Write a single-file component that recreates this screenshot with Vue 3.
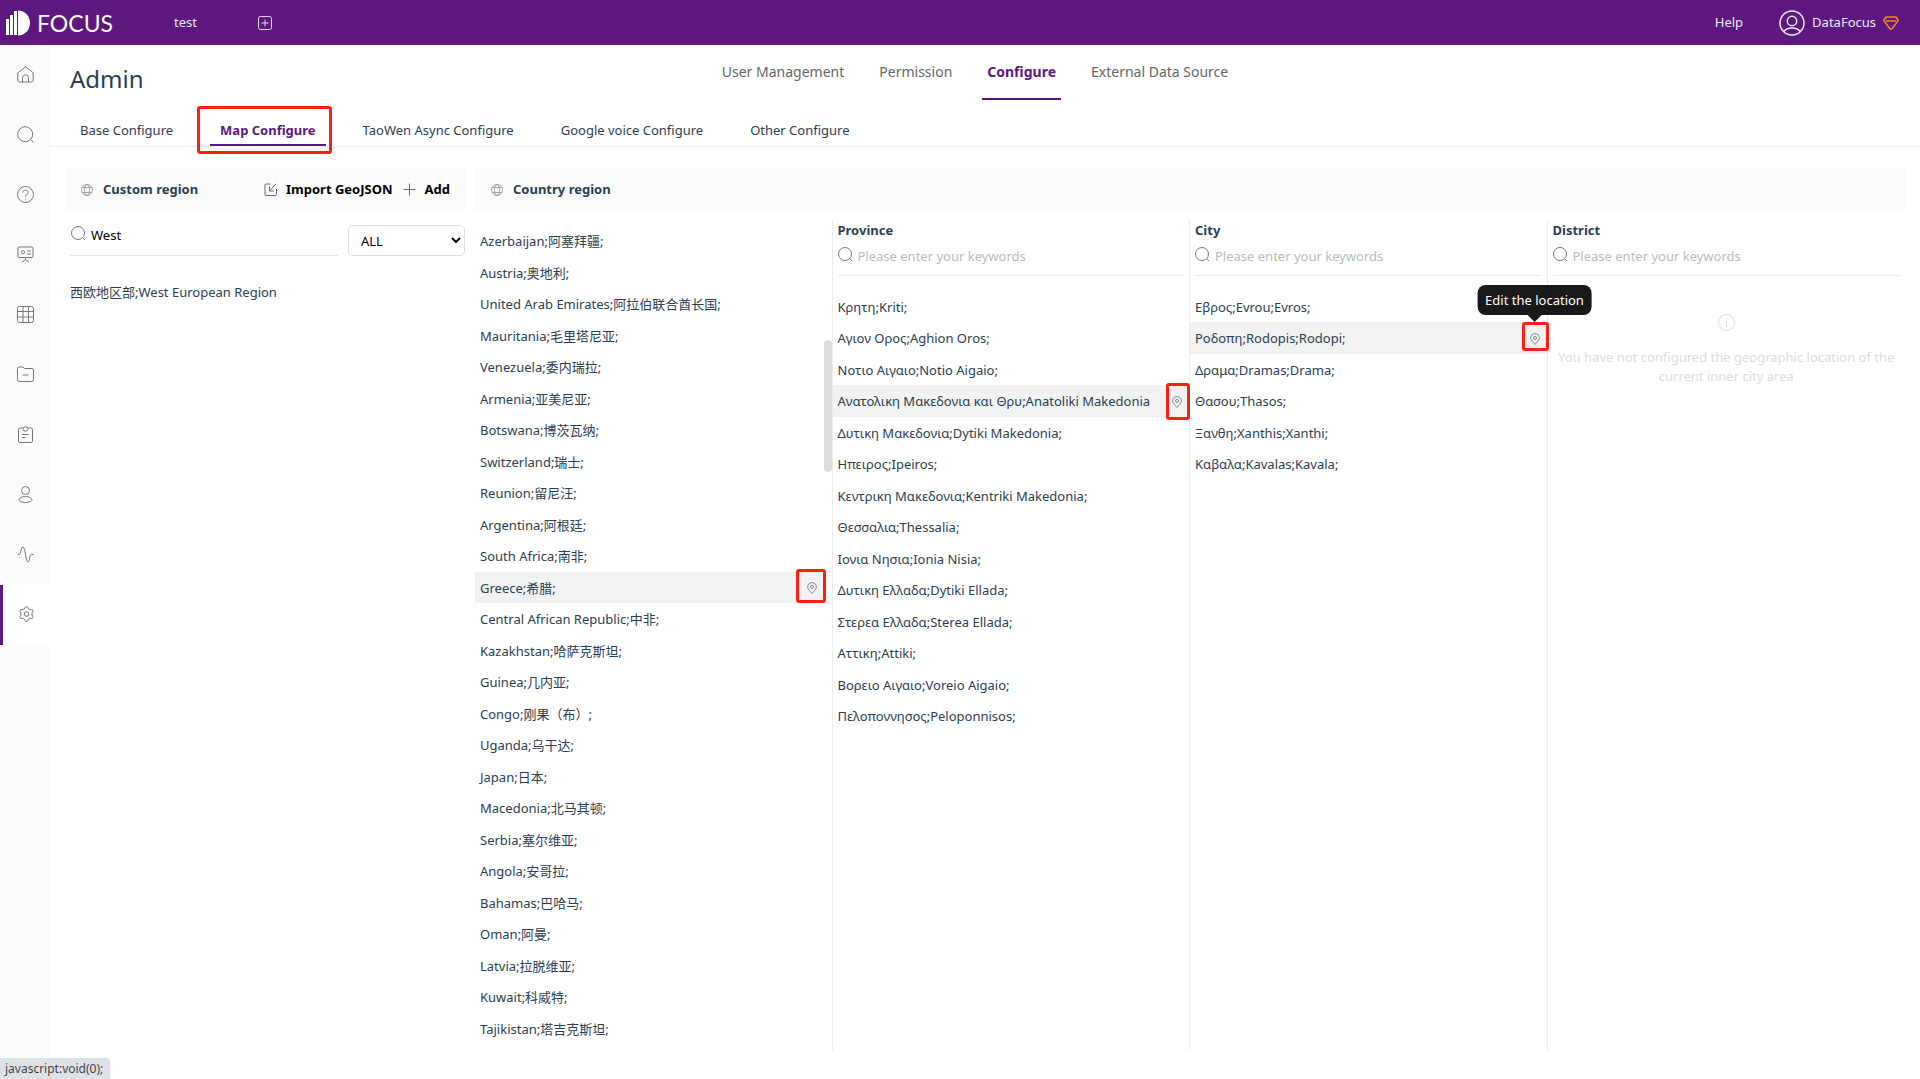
<script setup>
import { ref } from 'vue'

const navItems = ['User Management', 'Permission', 'Configure', 'External Data Source']
const activeNav = 'Configure'

const tabs = ['Base Configure', 'Map Configure', 'TaoWen Async Configure', 'Google voice Configure', 'Other Configure']
const activeTab = 'Map Configure'

const sideItems = [
  { name: 'Home', paths: ['M.8 6.800 8.500.8l7.700 6v7.400a1.800 1.800 0 0 1-1.800 1.800H2.600a1.800 1.800 0 0 1-1.800-1.800z', 'M5.500 16v-4.200a3 3 0 0 1 6 0V16'] },
  { name: 'Search', paths: ['M8.2.7a7.5 7.5 0 1 0 0 15 7.5 7.5 0 0 0 0-15z', 'M13.7 13.4l2.6 3'] },
  { name: 'Questions', paths: ['M8.5.5a8 8 0 1 0 0 16 8 8 0 0 0 0-16z', 'M6 6.6a2.5 2.5 0 1 1 3.9 2.1c-.9.6-1.4 1-1.4 2.1', 'M8.5 12.4v1.2'] },
  { name: 'Dashboards', paths: ['M2 1h13a1 1 0 0 1 1 1v8.5a1 1 0 0 1-1 1H2a1 1 0 0 1-1-1V2a1 1 0 0 1 1-1z', 'M8.5 11.5v2.5M5 16l3.5-2.3L12 16', 'M6 4.7a1.6 1.6 0 1 0 0 3.2 1.6 1.6 0 0 0 0-3.2z', 'M10 5h4M10 8h4'] },
  { name: 'Tables', paths: ['M2.5.5h12a2 2 0 0 1 2 2v12a2 2 0 0 1-2 2h-12a2 2 0 0 1-2-2v-12a2 2 0 0 1 2-2z', 'M.5 5.5h16M.5 11h16M6 .5v16M11.5.5v16'] },
  { name: 'Resources', paths: ['M.5 3V2.5A1.5 1.5 0 0 1 2 1h4l1.5 1.5H15A1.5 1.5 0 0 1 16.5 4v9.5a2 2 0 0 1-2 2h-12a2 2 0 0 1-2-2z', 'M5.5 9h6'] },
  { name: 'Tasks', paths: ['M5.5 2H3a1.5 1.5 0 0 0-1.5 1.5V15A1.5 1.5 0 0 0 3 16.5h11a1.500 1.500 0 0 0 1.500-1.500V3.500A1.500 1.500 0 0 0 14 2h-2.500', 'M6 1.500h1.500a1 1 0 0 1 2 0H11V3.500L10 5H7L6 3.500z', 'M5 8.500h6.500M5 11.500h3.500'] },
  { name: 'Users', paths: ['M8.5.5a4 4 0 1 0 0 8 4 4 0 0 0 0-8z', 'M8.5 10.5c3.500 0 6.500 1.600 6.500 3.300 0 1.500-3 2.700-6.500 2.700S2 15.300 2 13.800c0-1.700 3-3.300 6.500-3.300z'] },
  { name: 'Monitor', paths: ['M.5 8.500h1.700c2 0 1.500-7.500 3.600-7.500 3 0 2.500 15 5.300 15 2 0 1-7.500 3.400-7.500h2'] },
  { name: 'Admin', paths: ['M6.700 2.600 7.500.8h2l.8 1.800 1.900 1.100 2-.2 1 1.700-1.200 1.700v2.200l1.200 1.700-1 1.700-2-.2-1.900 1.100-.8 1.900h-2l-.8-1.900-1.900-1.100-2 .2-1-1.700L3 9.100V6.900L1.800 5.200l1-1.700 2 .2z', 'M8.500 5.700a2.300 2.300 0 1 0 0 4.600 2.300 2.300 0 0 0 0-4.600z'] },
]
const activeSide = 'Admin'

const keyword = ref('West')
const scope = ref('ALL')

const countries = [
  'Azerbaijan;阿塞拜疆;', 'Austria;奥地利;', 'United Arab Emirates;阿拉伯联合酋长国;', 'Mauritania;毛里塔尼亚;',
  'Venezuela;委内瑞拉;', 'Armenia;亚美尼亚;', 'Botswana;博茨瓦纳;', 'Switzerland;瑞士;', 'Reunion;留尼汪;',
  'Argentina;阿根廷;', 'South Africa;南非;', 'Greece;希腊;', 'Central African Republic;中非;',
  'Kazakhstan;哈萨克斯坦;', 'Guinea;几内亚;', 'Congo;刚果（布）;', 'Uganda;乌干达;', 'Japan;日本;',
  'Macedonia;北马其顿;', 'Serbia;塞尔维亚;', 'Angola;安哥拉;', 'Bahamas;巴哈马;', 'Oman;阿曼;',
  'Latvia;拉脱维亚;', 'Kuwait;科威特;', 'Tajikistan;塔吉克斯坦;',
]
const activeCountry = 11

const levels = [
  {
    id: 'province', title: 'Province', active: 3,
    rows: [
      'Κρητη;Kriti;', 'Αγιον Ορος;Aghion Oros;', 'Νοτιο Αιγαιο;Notio Aigaio;',
      'Ανατολικη Μακεδονια και Θρυ;Anatoliki Makedonia', 'Δυτικη Μακεδονια;Dytiki Makedonia;',
      'Ηπειρος;Ipeiros;', 'Κεντρικη Μακεδονια;Kentriki Makedonia;', 'Θεσσαλια;Thessalia;',
      'Ιονια Νησια;Ionia Nisia;', 'Δυτικη Ελλαδα;Dytiki Ellada;', 'Στερεα Ελλαδα;Sterea Ellada;',
      'Αττικη;Attiki;', 'Βορειο Αιγαιο;Voreio Aigaio;', 'Πελοποννησος;Peloponnisos;',
    ],
  },
  {
    id: 'city', title: 'City', active: 1, tip: 'Edit the location',
    rows: ['Εβρος;Evrou;Evros;', 'Ροδοπη;Rodopis;Rodopi;', 'Δραμα;Dramas;Drama;', 'Θασου;Thasos;', 'Ξανθη;Xanthis;Xanthi;', 'Καβαλα;Kavalas;Kavala;'],
  },
  { id: 'district', title: 'District', active: -1, rows: [] },
]
</script>

<template>
  <div class="app">
    <header class="topbar">
      <a href="#" class="logo">
        <svg width="25" height="26" viewBox="0 0 25 26" fill="#fff" aria-hidden="true">
          <rect x="0" y="9" width="3" height="16" />
          <rect x="4" y="5" width="3" height="20" />
          <rect x="8" y="1" width="3" height="24" />
          <path d="M12 .5c7 0 12 5.600 12 12.500s-5 12.500-12 12.500z" />
        </svg>
        <span>FOCUS</span>
      </a>
      <a href="#" class="project">test</a>
      <button class="icon-btn" aria-label="New tab">
        <svg width="14" height="14" viewBox="0 0 14 14" fill="none" stroke="#e3d8ea" aria-hidden="true">
          <rect x=".5" y=".5" width="13" height="13" rx="2" />
          <path d="M7 3.500v7M3.500 7h7" />
        </svg>
      </button>
      <div class="account">
        <a href="#" class="help">Help</a>
        <a href="#" class="user">
          <svg width="26" height="26" viewBox="0 0 26 26" fill="none" stroke="#efe8f3" stroke-width="1.500" aria-hidden="true">
            <circle cx="13" cy="13" r="12" />
            <circle cx="13" cy="11" r="4.700" />
            <path d="M5 21.500c1.500-2.500 4.500-3.500 8-3.500s6.500 1 8 3.500" />
          </svg>
          <span>DataFocus</span>
          <svg width="16" height="14" viewBox="0 0 16 14" fill="none" stroke="#f5821f" stroke-width="1.500" stroke-linejoin="round" aria-hidden="true">
            <path d="M3 1h10l2.200 3.500L8.800 13H7.200L.8 4.500zM3 5h10" />
          </svg>
        </a>
      </div>
    </header>

    <div class="body">
      <nav class="sidebar" aria-label="Main">
        <a v-for="item in sideItems" :key="item.name" href="#" :aria-label="item.name" :class="['side-item', { active: item.name === activeSide }]">
          <svg width="17" height="17" viewBox="0 0 17 17" aria-hidden="true">
            <path v-for="d in item.paths" :key="d" :d="d" />
          </svg>
        </a>
      </nav>

      <main class="main">
        <div class="heading">
          <h1>Admin</h1>
          <nav class="nav" aria-label="Admin">
            <a v-for="item in navItems" :key="item" href="#" :class="{ active: item === activeNav }">{{ item }}</a>
          </nav>
        </div>

        <nav class="tabs" aria-label="Configure">
          <a v-for="tab in tabs" :key="tab" href="#" :class="{ active: tab === activeTab }">
            {{ tab }}<i v-if="tab === activeTab" class="mark"></i>
          </a>
        </nav>

        <div class="panels">
          <section class="custom">
            <div class="panel-head">
              <svg class="globe" width="12" height="12" viewBox="0 0 12 12" aria-hidden="true">
                <circle cx="6" cy="6" r="5.500" /><ellipse cx="6" cy="6" rx="2.500" ry="5.500" /><path d="M1.300 3.500h9.400M1.300 8.500h9.400" />
              </svg>
              <h2>Custom region</h2>
              <div class="actions">
                <button>
                  <svg width="13" height="13" viewBox="0 0 13 13" aria-hidden="true"><path d="M6.500 1H2A1 1 0 0 0 1 2v9.500a1 1 0 0 0 1 1h9.500a1 1 0 0 0 1-1V6M12 .8 6 7.500M5.500 3.500v4.500H10" /></svg>
                  Import GeoJSON
                </button>
                <button>
                  <svg width="13" height="13" viewBox="0 0 13 13" aria-hidden="true"><path d="M6.500.5v12M.5 6.500h12" /></svg>
                  Add
                </button>
              </div>
            </div>
            <div class="filters">
              <label class="search">
                <svg width="15" height="15" viewBox="0 0 15 15" aria-hidden="true"><circle cx="7" cy="7" r="6.500" /><path d="M11.800 11.800l2.200 2.200" /></svg>
                <input v-model="keyword" type="text" aria-label="Search custom regions" />
              </label>
              <select v-model="scope" aria-label="Scope"><option>ALL</option></select>
            </div>
            <ul class="custom-list"><li>西欧地区部;West European Region</li></ul>
          </section>

          <section class="country">
            <div class="panel-head">
              <svg class="globe" width="12" height="12" viewBox="0 0 12 12" aria-hidden="true">
                <circle cx="6" cy="6" r="5.500" /><ellipse cx="6" cy="6" rx="2.500" ry="5.500" /><path d="M1.300 3.500h9.400M1.300 8.500h9.400" />
              </svg>
              <h2>Country region</h2>
            </div>
            <div class="columns">
              <div class="column countries">
                <ul class="rows">
                  <li v-for="(row, i) in countries" :key="row" :class="{ active: i === activeCountry }">
                    <span>{{ row }}</span>
                    <button v-if="i === activeCountry" class="pin" aria-label="Edit the location">
                      <svg width="10" height="12" viewBox="0 0 10 12" aria-hidden="true"><path d="M5 .6c2.500 0 4.400 1.900 4.400 4.300C9.400 7.300 6.500 9.500 5 11.400 3.500 9.500.6 7.300.6 4.900.6 2.500 2.500.6 5 .6z" /><circle cx="5" cy="4.900" r="1.500" /></svg>
                      <i class="mark"></i>
                    </button>
                  </li>
                </ul>
                <div class="thumb"></div>
              </div>
              <div v-for="level in levels" :key="level.id" :class="['column', 'level', level.id]">
                <h3>{{ level.title }}</h3>
                <label class="search">
                  <svg width="15" height="15" viewBox="0 0 15 15" aria-hidden="true"><circle cx="7" cy="7" r="6.500" /><path d="M11.800 11.800l2.200 2.200" /></svg>
                  <input type="text" placeholder="Please enter your keywords" :aria-label="level.title" />
                </label>
                <ul v-if="level.rows.length" class="rows">
                  <li v-for="(row, i) in level.rows" :key="row" :class="{ active: i === level.active }">
                    <span>{{ row }}</span>
                    <button v-if="i === level.active" class="pin" aria-label="Edit the location">
                      <svg width="10" height="12" viewBox="0 0 10 12" aria-hidden="true"><path d="M5 .6c2.500 0 4.400 1.900 4.400 4.300C9.400 7.300 6.500 9.500 5 11.400 3.500 9.500.6 7.300.6 4.900.6 2.500 2.500.6 5 .6z" /><circle cx="5" cy="4.900" r="1.500" /></svg>
                      <i class="mark"></i>
                      <span v-if="level.tip" class="tip" role="tooltip">{{ level.tip }}</span>
                    </button>
                  </li>
                </ul>
                <div v-else class="empty">
                  <svg width="17" height="17" viewBox="0 0 17 17" aria-hidden="true"><circle cx="8.500" cy="8.500" r="8" /><path d="M8.500 4v1.500M8.500 7v6" /></svg>
                  <p>You have not configured the geographic location of the current inner city area</p>
                </div>
              </div>
            </div>
          </section>
        </div>
      </main>
    </div>
    <div class="status">javascript:void(0);</div>
  </div>
</template>

<style>
body {
  margin: 0;
}
</style>

<style scoped>
.app {
  display: flex;
  flex-direction: column;
  min-height: 100vh;
  background: #fff;
  color: #2c3e50;
  font: 13px/1.5 "Noto Sans", "Noto Sans CJK SC", sans-serif;
}
* {
  box-sizing: border-box;
}
a {
  color: inherit;
  text-decoration: none;
}
h1, h2, h3, p, ul {
  margin: 0;
  padding: 0;
  list-style: none;
}
button, input, select {
  font: inherit;
}
button {
  padding: 0;
  border: 0;
  background: none;
}
svg {
  display: block;
  flex: none;
}

.topbar {
  display: flex;
  align-items: center;
  height: 45px;
  padding: 0 21px 0 6px;
  background: #5c187f;
  color: #efe8f3;
}
.logo {
  display: flex;
  align-items: center;
  gap: 6px;
  width: 168px;
  color: #fff;
  font: 23px/26px Lato, sans-serif;
}
.project {
  width: 84px;
}
.account {
  display: flex;
  align-items: center;
  gap: 36px;
  margin-left: auto;
}
.user {
  display: flex;
  align-items: center;
  gap: 7px;
}

.body {
  display: flex;
  flex: 1;
}
.sidebar {
  width: 50px;
  background: #fafcfb;
}
.side-item {
  display: flex;
  align-items: center;
  justify-content: center;
  height: 60px;
  padding-bottom: 2px;
}
.side-item.active {
  border-left: 3px solid #5c187f;
  background: #fff;
}
.side-item svg {
  fill: none;
  stroke: #777;
}

.main {
  display: flex;
  flex: 1;
  flex-direction: column;
  min-width: 0;
  padding-bottom: 29px;
}
.heading {
  display: grid;
  grid-template-columns: 1fr auto 1fr;
  align-items: start;
  height: 63px;
  padding: 0 40px 0 20px;
}
h1 {
  padding-top: 16px;
  font-size: 24px;
  font-weight: 400;
  line-height: 36px;
}
.nav {
  display: flex;
  gap: 25px;
  color: #666;
  font-size: 14px;
  line-height: 53px;
}
.nav a {
  padding: 0 5px;
}
.nav .active {
  border-bottom: 2px solid #5c187f;
  color: #5c187f;
  font-weight: 700;
}
.tabs {
  display: flex;
  gap: 27px;
  height: 39px;
  padding: 0 20px;
  border-bottom: 1px solid #f0f2f2;
}
.tabs a {
  position: relative;
  padding: 0 10px;
  line-height: 44px;
}
.tabs .active {
  border-bottom: 2px solid #5c187f;
  color: #5c187f;
  font-weight: 700;
}
.mark {
  position: absolute;
  z-index: 1;
  border: 3px solid #ff1f12;
  border-radius: 3px;
}
.tabs .mark {
  inset: -2px -6px -10px -13px;
}

.panels {
  display: flex;
  flex: 1;
  gap: 10px;
  padding: 20px 15px 0;
}
.custom {
  width: 400px;
}
.country {
  display: flex;
  flex: 1;
  flex-direction: column;
  min-width: 0;
}
.panel-head {
  display: flex;
  align-items: center;
  gap: 10px;
  height: 43px;
  padding: 2px 15px 0 16px;
  background: #fafcfb;
}
h2, h3 {
  font-size: 13px;
  font-weight: 700;
}
.globe {
  fill: none;
  stroke: #8f8f96;
  stroke-width: 0.8;
}
.actions {
  display: flex;
  gap: 10px;
  margin-left: auto;
}
.actions button {
  display: flex;
  align-items: center;
  gap: 9px;
  color: #000;
  font-weight: 700;
}
.actions svg {
  fill: none;
  stroke: #666;
}
.search {
  display: flex;
  align-items: flex-start;
  gap: 5px;
}
.search svg {
  fill: none;
  stroke: #777785;
}
.search input {
  flex: 1;
  min-width: 0;
  height: 18px;
  padding: 0;
  border: 0;
  outline: 0;
  background: none;
  color: #000;
  line-height: 18px;
}
.search input::placeholder {
  color: #bbb;
}
.filters {
  display: flex;
  gap: 10px;
  padding: 15px 0 0 5px;
}
.filters .search {
  flex: 1;
  padding: 1px 0 0 1px;
  border-bottom: 1px solid #e6e6ee;
}
.filters select {
  width: 117px;
  height: 31px;
  padding: 0 0 0 8px;
  border: 1px solid #ddd;
  border-radius: 5px;
  background: #fff;
  color: #000;
}
.custom-list {
  padding: 27px 5px 0;
}

.columns {
  display: grid;
  flex: 1;
  grid-template-columns: repeat(4, 1fr);
  padding-top: 10px;
}
.column {
  position: relative;
  min-width: 0;
  border-right: 1px solid #ececec;
}
.column:last-child {
  border-right: 0;
}
.countries {
  padding: 5px 8px 0 0;
}
.thumb {
  position: absolute;
  top: 120px;
  right: 0;
  width: 8px;
  height: 132px;
  border-radius: 4px;
  background: #ddd;
}
h3 {
  padding: 1px 0 0 5px;
}
.level .search {
  height: 29px;
  margin: 6px 5px 15px;
  border-bottom: 1px solid #ececec;
}
.rows li {
  display: flex;
  align-items: center;
  justify-content: space-between;
  padding: 7px 7px 5px 5px;
  white-space: nowrap;
}
.rows .active {
  background: #f1f3f2;
}
.pin {
  position: relative;
}
.pin svg {
  fill: none;
  stroke: #85858c;
}
.countries .mark {
  inset: -13px -9px -9px -11px;
}
.province .mark {
  inset: -13px -8px -12px -6px;
}
.city .mark {
  inset: -11px -9px -6px -8px;
}
.tip {
  position: absolute;
  bottom: 30px;
  left: 50%;
  z-index: 1;
  padding: 5px 8px;
  border-radius: 8px;
  background: rgba(0, 0, 0, 0.9);
  color: #fff;
  line-height: 20px;
  transform: translateX(-50%);
}
.tip::after {
  position: absolute;
  top: 100%;
  left: 50%;
  border: 7px solid transparent;
  border-top-color: rgba(0, 0, 0, 0.9);
  border-bottom: 0;
  content: "";
  transform: translateX(-50%);
}
.empty {
  display: flex;
  flex-direction: column;
  align-items: center;
  gap: 17px;
  padding: 23px 8px 0;
  color: #ddd;
  text-align: center;
}
.empty svg {
  fill: none;
  stroke: #ddd;
}
.status {
  position: fixed;
  bottom: 0;
  left: 0;
  padding: 1px 7px 0 5px;
  border-radius: 0 4px 0 0;
  background: #dee1e6;
  color: #444;
  font-size: 12px;
  line-height: 20px;
}
</style>
